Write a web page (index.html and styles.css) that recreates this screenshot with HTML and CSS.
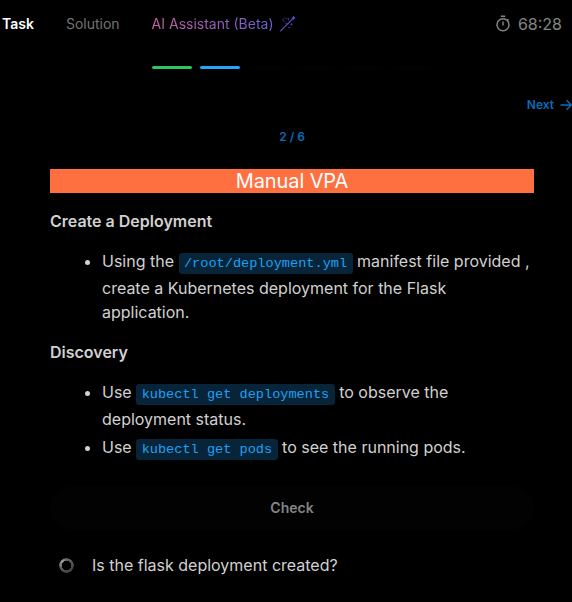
FILE: index.html
```
<!DOCTYPE html>
<html lang="en">
<head>
<meta charset="utf-8">
<title>Manual VPA</title>
<link rel="stylesheet" href="styles.css">
</head>
<body>
<header class="topbar">
  <nav class="tabs">
    <span class="tab active">Task</span>
    <span class="tab">Solution</span>
    <span class="tab assistant"><span class="assistant-label">AI Assistant (Beta)</span>
      <svg class="wand" width="16" height="16" viewBox="0 0 16 16" fill="none" stroke="#5a50d2" stroke-linecap="round">
        <path d="M.7 14.8 12.6 2.9" stroke-width="1.2"/>
        <path d="M13.6.6v2.6M12.3 1.9h2.6" stroke-width="1.1"/>
        <path d="M4 2.2C2.4 3 2.6 5 4.4 5.8M6 2.5h1M8.5 2.5v1.5M5.5 7l1.2.8M11.5 7.5v1.5M10.8 8.3h1.6M8.5 11.5h1" stroke-width="1" opacity=".65"/>
      </svg>
    </span>
  </nav>
  <div class="timer">
    <svg width="16" height="18" viewBox="0 0 16 18" fill="none" stroke="currentColor" stroke-width="1.5">
      <circle cx="8" cy="9.8" r="6"/>
      <path d="M5.8 1.3h4.4M8 6.5v4M12.3 5.5l1.3-1.3"/>
    </svg>
    <span>68:28</span>
  </div>
</header>
<div class="progress"><i class="step done"></i><i class="step current"></i><i class="step"></i><i class="step"></i><i class="step"></i><i class="step"></i></div>
<div class="next"><span>Next</span>
  <svg width="12" height="12" viewBox="0 0 12 12" fill="none" stroke="currentColor" stroke-width="1.4"><path d="M.5 6h10.5M6.5 1.3 11.2 6 6.5 10.7"/></svg>
</div>
<div class="counter">2 / 6</div>
<main class="content">
  <h1>Manual VPA</h1>
  <h2>Create a Deployment</h2>
  <ul>
    <li>Using the <code>/root/deployment.yml</code> manifest file provided , create a Kubernetes deployment for the Flask application.</li>
  </ul>
  <h2>Discovery</h2>
  <ul>
    <li>Use <code>kubectl get deployments</code> to observe the deployment status.</li>
    <li>Use <code>kubectl get pods</code> to see the running pods.</li>
  </ul>
  <button class="check" disabled>Check</button>
  <div class="question"><span class="spinner"></span><span>Is the flask deployment created?</span></div>
</main>
</body>
</html>
```
FILE: styles.css
```
* { box-sizing: border-box; }
body {
  margin: 0;
  height: 602px;
  overflow: hidden;
  background: #000;
  color: #d1d1d1;
  font: 16px/24px Inter, "Liberation Sans", sans-serif;
}
svg { display: block; flex: none; }
.topbar {
  display: flex;
  justify-content: space-between;
  height: 48px;
  padding: 0 10px 0 2px;
  align-items: center;
}
.tabs { display: flex; gap: 32px; font-size: 14px; line-height: 20px; color: #737373; }
.active { color: #fff; font-weight: 600; }
.assistant { display: flex; align-items: center; gap: 6px; }
.assistant-label {
  background: linear-gradient(90deg, #c465a4, #6b5fd0);
  -webkit-background-clip: text;
  background-clip: text;
  color: transparent;
}
.timer { display: flex; align-items: center; gap: 7px; color: #858585; }
.progress { display: flex; gap: 8px; margin: 18px 0 0 152px; }
.step { width: 40px; height: 3px; border-radius: 2px; background: #020202; }
.done { background: #2dc55e; }
.current { background: #22a6f7; }
.next {
  display: flex;
  justify-content: flex-end;
  align-items: center;
  gap: 6px;
  margin-top: 28px;
  font-size: 12px;
  line-height: 16px;
  font-weight: 600;
  color: #0b6cb8;
}
.counter {
  margin: 16px 0 0 12px;
  text-align: center;
  font-size: 12px;
  line-height: 16px;
  font-weight: 600;
  color: #0b6cb8;
}
.content { width: 484px; margin: 24px 0 0 50px; }
h1 {
  margin: 0;
  background: #ff7040;
  color: #fff;
  text-align: center;
  font-size: 20px;
  line-height: 24px;
  font-weight: 400;
  letter-spacing: -0.1px;
}
h2 { margin: 16px 0; font-size: 16px; line-height: 24px; font-weight: 600; }
ul { margin: 0 0 16px; padding-left: 52px; }
li + li { margin-top: 4px; }
code {
  padding: 0.2em 0.4em;
  border-radius: 3px;
  background: #082438;
  color: #1da1f5;
  font: 13.6px/24px "Liberation Mono", monospace;
}
.check {
  display: block;
  width: 100%;
  height: 44px;
  margin-top: 24px;
  border: 0;
  border-radius: 22px;
  background: #020202;
  color: #858585;
  font: 600 14px/20px Inter, sans-serif;
}
.question { display: flex; align-items: center; margin-top: 23px; padding-left: 9px; gap: 18px; }
.spinner {
  width: 15px;
  height: 15px;
  border-radius: 50%;
  background: conic-gradient(#666, #444 35%, #4c4c4c 60%, #999 88%, #666);
  -webkit-mask: radial-gradient(circle, transparent 4.5px, #000 5px);
  mask: radial-gradient(circle, transparent 4.5px, #000 5px);
}
```
